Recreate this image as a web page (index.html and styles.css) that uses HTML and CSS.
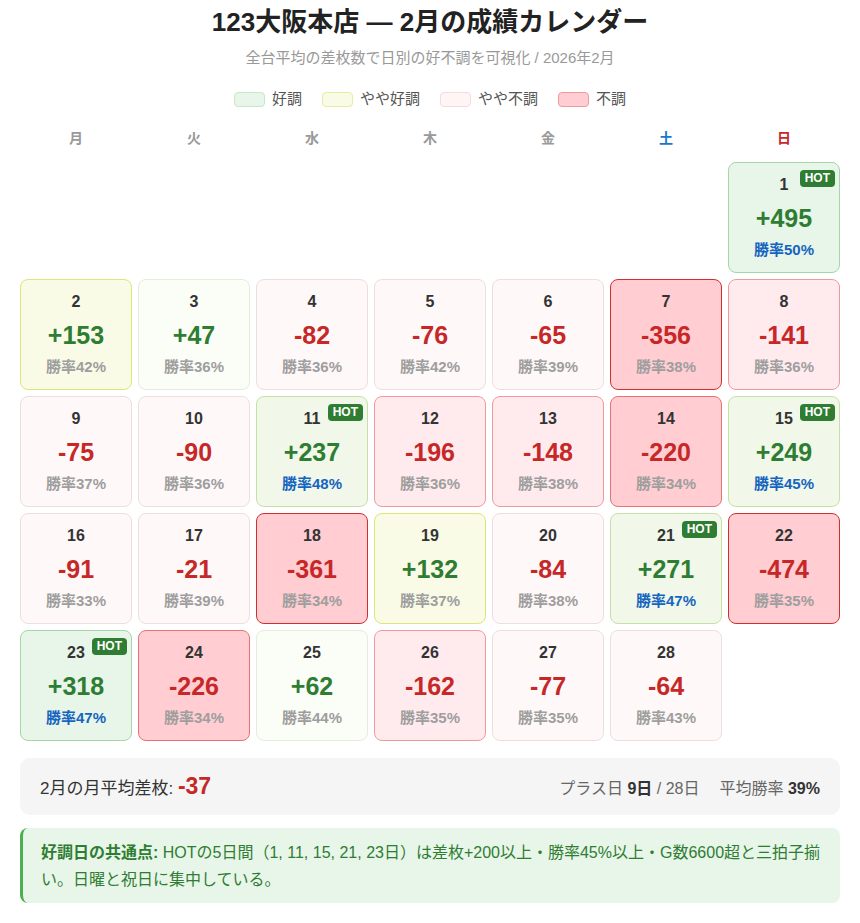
FILE: index.html
```html
<!DOCTYPE html>
<html lang="ja">
<head>
<meta charset="utf-8">
<title>123大阪本店 — 2月の成績カレンダー</title>
<link rel="stylesheet" href="styles.css">
</head>
<body>
<div class="page">
  <h1 class="title">123大阪本店 — 2月の成績カレンダー</h1>
  <p class="subtitle">全台平均の差枚数で日別の好不調を可視化 / 2026年2月</p>
  <div class="legend">
    <span class="legend-item"><span class="swatch sw-good"></span>好調</span>
    <span class="legend-item"><span class="swatch sw-sgood"></span>やや好調</span>
    <span class="legend-item"><span class="swatch sw-sbad"></span>やや不調</span>
    <span class="legend-item"><span class="swatch sw-bad"></span>不調</span>
  </div>
  <div class="weekdays">
    <div class="wd">月</div><div class="wd">火</div><div class="wd">水</div><div class="wd">木</div><div class="wd">金</div><div class="wd sat">土</div><div class="wd sun">日</div>
  </div>
  <div class="grid">
    <div class="empty"></div><div class="empty"></div><div class="empty"></div><div class="empty"></div><div class="empty"></div><div class="empty"></div>
    <div class="cell p4"><span class="hot">HOT</span><div class="day">1</div><div class="val pos">+495</div><div class="rate hi">勝率50%</div></div>

    <div class="cell p2"><div class="day">2</div><div class="val pos">+153</div><div class="rate">勝率42%</div></div>
    <div class="cell p1"><div class="day">3</div><div class="val pos">+47</div><div class="rate">勝率36%</div></div>
    <div class="cell n1"><div class="day">4</div><div class="val neg">-82</div><div class="rate">勝率36%</div></div>
    <div class="cell n1"><div class="day">5</div><div class="val neg">-76</div><div class="rate">勝率42%</div></div>
    <div class="cell n1"><div class="day">6</div><div class="val neg">-65</div><div class="rate">勝率39%</div></div>
    <div class="cell n4"><div class="day">7</div><div class="val neg">-356</div><div class="rate">勝率38%</div></div>
    <div class="cell n2"><div class="day">8</div><div class="val neg">-141</div><div class="rate">勝率36%</div></div>

    <div class="cell n1"><div class="day">9</div><div class="val neg">-75</div><div class="rate">勝率37%</div></div>
    <div class="cell n1"><div class="day">10</div><div class="val neg">-90</div><div class="rate">勝率36%</div></div>
    <div class="cell p3"><span class="hot">HOT</span><div class="day">11</div><div class="val pos">+237</div><div class="rate hi">勝率48%</div></div>
    <div class="cell n2"><div class="day">12</div><div class="val neg">-196</div><div class="rate">勝率36%</div></div>
    <div class="cell n2"><div class="day">13</div><div class="val neg">-148</div><div class="rate">勝率38%</div></div>
    <div class="cell n3"><div class="day">14</div><div class="val neg">-220</div><div class="rate">勝率34%</div></div>
    <div class="cell p3"><span class="hot">HOT</span><div class="day">15</div><div class="val pos">+249</div><div class="rate hi">勝率45%</div></div>

    <div class="cell n1"><div class="day">16</div><div class="val neg">-91</div><div class="rate">勝率33%</div></div>
    <div class="cell n1"><div class="day">17</div><div class="val neg">-21</div><div class="rate">勝率39%</div></div>
    <div class="cell n4"><div class="day">18</div><div class="val neg">-361</div><div class="rate">勝率34%</div></div>
    <div class="cell p2"><div class="day">19</div><div class="val pos">+132</div><div class="rate">勝率37%</div></div>
    <div class="cell n1"><div class="day">20</div><div class="val neg">-84</div><div class="rate">勝率38%</div></div>
    <div class="cell p3"><span class="hot">HOT</span><div class="day">21</div><div class="val pos">+271</div><div class="rate hi">勝率47%</div></div>
    <div class="cell n4"><div class="day">22</div><div class="val neg">-474</div><div class="rate">勝率35%</div></div>

    <div class="cell p4"><span class="hot">HOT</span><div class="day">23</div><div class="val pos">+318</div><div class="rate hi">勝率47%</div></div>
    <div class="cell n3"><div class="day">24</div><div class="val neg">-226</div><div class="rate">勝率34%</div></div>
    <div class="cell p1"><div class="day">25</div><div class="val pos">+62</div><div class="rate">勝率44%</div></div>
    <div class="cell n2"><div class="day">26</div><div class="val neg">-162</div><div class="rate">勝率35%</div></div>
    <div class="cell n1"><div class="day">27</div><div class="val neg">-77</div><div class="rate">勝率35%</div></div>
    <div class="cell n1"><div class="day">28</div><div class="val neg">-64</div><div class="rate">勝率43%</div></div>
  </div>

  <div class="summary">
    <div class="sum-left">2月の月平均差枚: <span class="avg">-37</span></div>
    <div class="sum-right">
      <span>プラス日 <b>9日</b> / 28日</span>
      <span>平均勝率 <b>39%</b></span>
    </div>
  </div>

  <div class="insight"><b>好調日の共通点:</b> HOTの5日間（1, 11, 15, 21, 23日）は差枚+200以上・勝率45%以上・G数6600超と三拍子揃い。日曜と祝日に集中している。</div>
</div>
</body>
</html>
```

FILE: styles.css
```css
* { box-sizing: border-box; }
html, body { margin: 0; padding: 0; background: #fff; }
body {
  font-family: "Liberation Sans", "Noto Sans CJK JP", sans-serif;
  color: #333;
}
.page { padding: 6px 20px 20px; }
.title {
  margin: 0;
  text-align: center;
  font-size: 26px;
  line-height: 32px;
  font-weight: 700;
  color: #222;
}
.subtitle {
  margin: 10px 0 0;
  text-align: center;
  font-size: 15px;
  line-height: 20px;
  color: #999;
}
.legend {
  margin-top: 21px;
  display: flex;
  justify-content: center;
  gap: 20px;
  font-size: 15px;
  line-height: 20px;
  color: #555;
}
.legend-item { display: flex; align-items: center; gap: 7px; }
.swatch {
  display: inline-block;
  width: 31px;
  height: 15px;
  border-radius: 4px;
  border: 1px solid #ddd;
}
.sw-good { background: #e8f5e9; border-color: #c8e6c9; }
.sw-sgood { background: #f9fbe7; border-color: #e6ee9c; }
.sw-sbad { background: #fff5f5; border-color: #f3dcdc; }
.sw-bad { background: #ffcdd2; border-color: #ef9a9a; }

.weekdays {
  margin-top: 19px;
  display: grid;
  grid-template-columns: repeat(7, 1fr);
  gap: 6px;
}
.wd {
  text-align: center;
  font-size: 14px;
  line-height: 20px;
  font-weight: 700;
  color: #999;
}
.wd.sat { color: #1976d2; }
.wd.sun { color: #c62828; }

.grid {
  margin-top: 14px;
  display: grid;
  grid-template-columns: repeat(7, 1fr);
  grid-auto-rows: 111px;
  gap: 6px;
}
.cell {
  position: relative;
  border: 1px solid #e0e0e0;
  border-radius: 8px;
  padding-top: 12px;
  display: flex;
  flex-direction: column;
  align-items: center;
}
.day {
  font-size: 16px;
  line-height: 20px;
  font-weight: 700;
  color: #333;
}
.val {
  margin-top: 7px;
  font-size: 25px;
  line-height: 32px;
  font-weight: 700;
}
.val.pos { color: #2e7d32; }
.val.neg { color: #c62828; }
.rate {
  margin-top: 6px;
  font-size: 15px;
  line-height: 20px;
  font-weight: 700;
  color: #9e9e9e;
}
.rate.hi { color: #1565c0; }
.hot {
  position: absolute;
  top: 7px;
  right: 4px;
  background: #2e7d32;
  color: #fff;
  font-size: 12px;
  line-height: 17px;
  font-weight: 700;
  padding: 0 5px;
  border-radius: 4px;
}
.p4 { background: #e8f5e9; border-color: #a5d6a7; }
.p3 { background: #f1f8e9; border-color: #c5e1a5; }
.p2 { background: #f9fbe7; border-color: #dce775; }
.p1 { background: #fbfdf7; border-color: #e4ecdc; }
.n1 { background: #fff8f8; border-color: #eedede; }
.n2 { background: #ffebee; border-color: #ef9a9a; }
.n3 { background: #ffcdd2; border-color: #e57373; }
.n4 { background: #ffcdd2; border-color: #d32f2f; }

.summary {
  margin-top: 17px;
  background: #f5f5f5;
  border-radius: 10px;
  height: 57px;
  padding: 0 20px;
  display: flex;
  align-items: center;
  justify-content: space-between;
}
.sum-left { font-size: 17px; color: #333; }
.avg { font-size: 23px; font-weight: 700; color: #c62828; }
.sum-right { display: flex; gap: 20px; font-size: 16px; color: #666; }
.sum-right b { color: #333; }

.insight {
  margin-top: 13px;
  background: #e8f5e9;
  border-left: 3px solid #4caf50;
  border-radius: 8px;
  padding: 11px 14px 10px 18px;
  font-size: 16px;
  line-height: 27px;
  color: #2e7d32;
}
```
